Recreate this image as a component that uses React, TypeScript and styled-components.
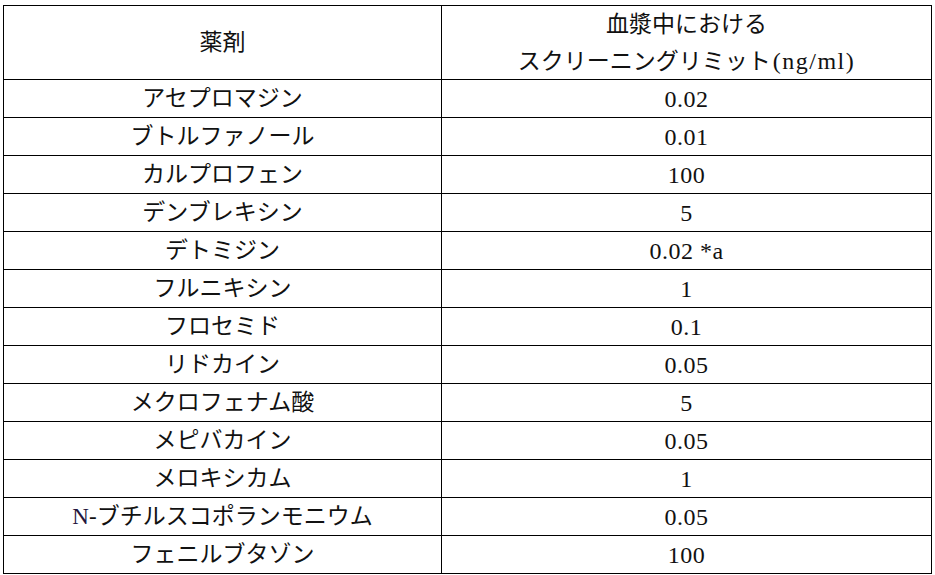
import React from 'react'
import styled, { createGlobalStyle } from 'styled-components'

const GlobalStyle = createGlobalStyle`
  html, body {
    margin: 0;
    padding: 0;
    background: #ffffff;
  }
  body {
    font-family: "Liberation Serif", "Noto Sans CJK JP", serif;
    color: #000000;
  }
`

const Page = styled.div`
  padding: 5px 0 0 3px;
  width: 935px;
  height: 575px;
  box-sizing: border-box;
  overflow: hidden;
`

const Table = styled.div`
  display: grid;
  grid-template-columns: 438px 490px;
  width: 929px;
  border-top: 1px solid #000;
  border-left: 1px solid #000;
  box-sizing: border-box;
`

const Cell = styled.div<{ $header?: boolean }>`
  display: flex;
  flex-direction: column;
  align-items: center;
  justify-content: center;
  box-sizing: border-box;
  height: ${props => (props.$header ? '74px' : '38px')};
  border-right: 1px solid #000;
  border-bottom: 1px solid #000;
  font-family: "Liberation Serif", "Noto Sans CJK JP", serif;
  font-size: 23px;
  line-height: ${props => (props.$header ? '37px' : '26px')};
  font-weight: 400;
  color: #111;
  white-space: nowrap;
  padding-top: ${props => (props.$header ? '0' : '1px')};
`

const Line = styled.span`
  display: block;
`

const Unit = styled.span`
  font-size: 24px;
  letter-spacing: 1.5px;
  margin-left: 2px;
`

const Value = styled.span`
  font-size: 24px;
  letter-spacing: 0.5px;
`

const Prefix = styled.span`
  color: #24163c;
`

interface Row {
  drug: React.ReactNode
  limit: string
}

const rows: Row[] = [
  { drug: 'アセプロマジン', limit: '0.02' },
  { drug: 'ブトルファノール', limit: '0.01' },
  { drug: 'カルプロフェン', limit: '100' },
  { drug: 'デンブレキシン', limit: '5' },
  { drug: 'デトミジン', limit: '0.02 *a' },
  { drug: 'フルニキシン', limit: '1' },
  { drug: 'フロセミド', limit: '0.1' },
  { drug: 'リドカイン', limit: '0.05' },
  { drug: 'メクロフェナム酸', limit: '5' },
  { drug: 'メピバカイン', limit: '0.05' },
  { drug: 'メロキシカム', limit: '1' },
  {
    drug: (
      <>
        <Prefix>N</Prefix>‐ブチルスコポランモニウム
      </>
    ),
    limit: '0.05',
  },
  { drug: 'フェニルブタゾン', limit: '100' },
]

export default function App() {
  return (
    <>
      <GlobalStyle />
      <Page>
        <Table>
          <Cell $header>薬剤</Cell>
          <Cell $header>
            <Line>血漿中における</Line>
            <Line>
              スクリーニングリミット<Unit>(ng/ml)</Unit>
            </Line>
          </Cell>
          {rows.map((row, i) => (
            <React.Fragment key={i}>
              <Cell>
                <Line>{row.drug}</Line>
              </Cell>
              <Cell>
                <Value>{row.limit}</Value>
              </Cell>
            </React.Fragment>
          ))}
        </Table>
      </Page>
    </>
  )
}
